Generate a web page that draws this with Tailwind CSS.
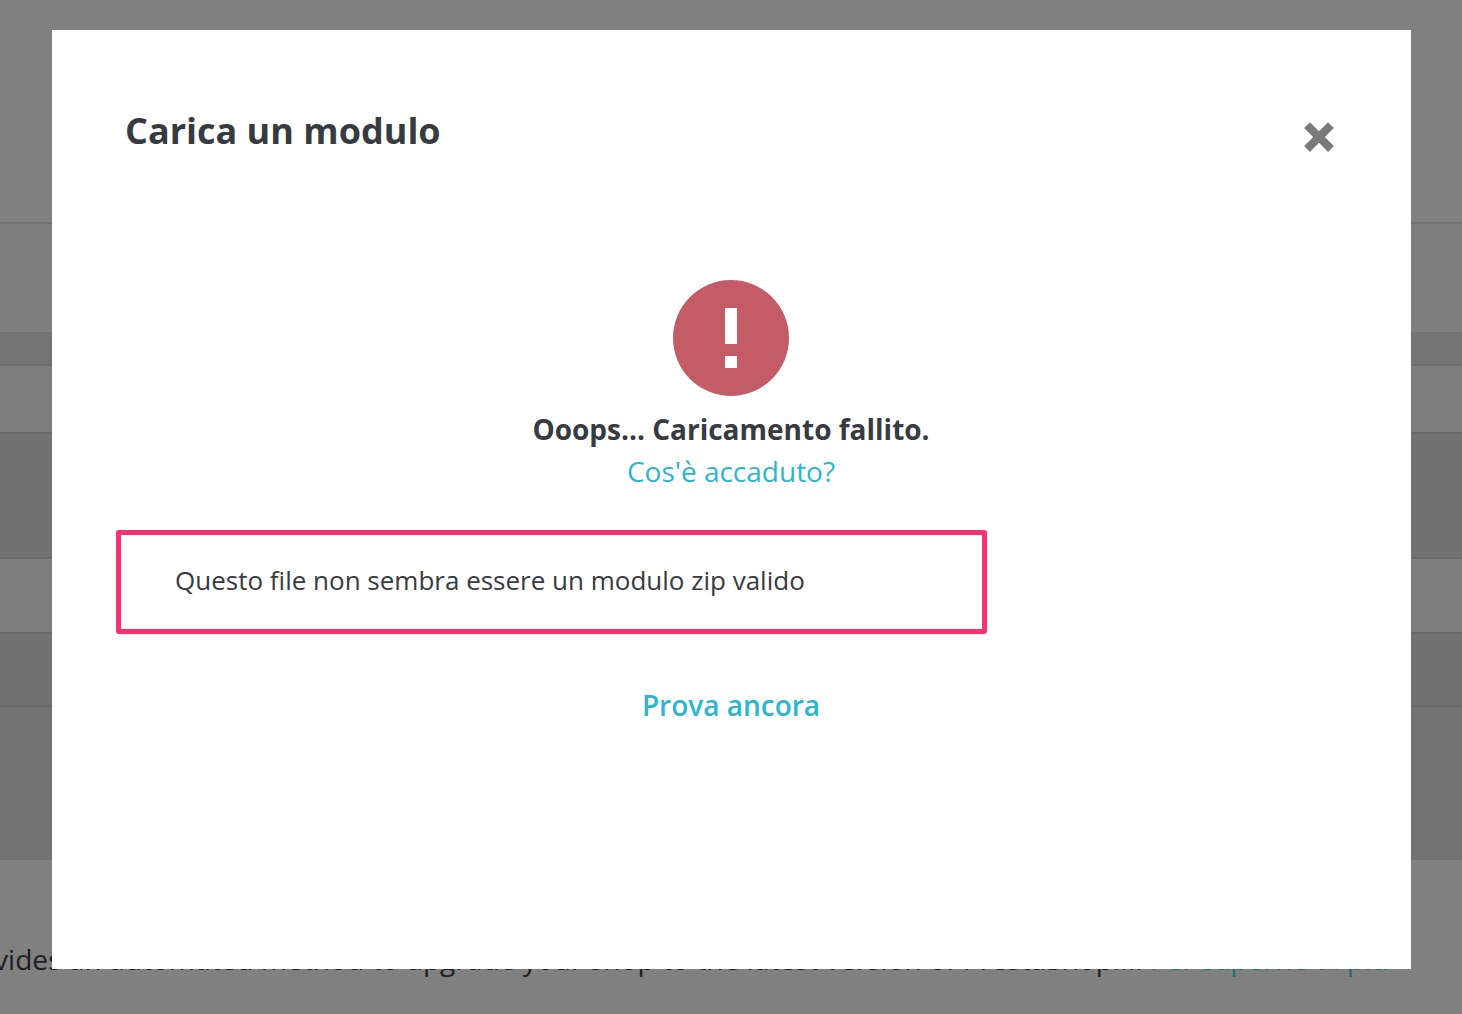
<!DOCTYPE html>
<html><head><meta charset="utf-8"><script src="https://cdn.jsdelivr.net/npm/@tailwindcss/browser@4"></script></head>
<body class="m-0">
<div class="relative w-[1462px] h-[1014px] overflow-hidden bg-[#808080] font-['Open_Sans',sans-serif]">
  <div class="flex flex-col">
    <div class="h-[222px] bg-[#808080]"></div>
    <div class="h-[110px] border-t-2 border-[#6f7173] bg-[#7f7f7f]"></div>
    <div class="h-[32px] bg-[#747474]"></div>
    <div class="h-[68px] border-t-2 border-[#6b6d6f] bg-[#7c7c7c]"></div>
    <div class="h-[125px] border-t-2 border-[#66686a] bg-[#727272]"></div>
    <div class="h-[75px] border-t-2 border-[#696b6d] bg-[#7c7c7c]"></div>
    <div class="h-[73px] border-t-2 border-[#696b6d] bg-[#727272]"></div>
    <div class="h-[155px] border-t-2 border-[#696b6d] bg-[#737373]"></div>
    <div class="h-[154px] bg-[#808080] pt-[81px] whitespace-nowrap text-[28.14px] leading-[36px] text-[#1e2026] -ml-[6px]">vides an automated method to upgrade your shop to the latest version of PrestaShop.... <span class="text-[#1f6f78]">Per saperne di più</span></div>
  </div>
  <div class="absolute left-[52px] top-[30px] w-[1359px] h-[939px] bg-white">
    <div class="flex items-start justify-between pl-[73px] pr-[76px] pt-[76px]">
      <h2 class="text-[36px] leading-[50px] font-bold text-[#363a41]">Carica un modulo</h2>
      <svg class="mt-[14px] -mr-[1px]" width="34" height="34" viewBox="0 0 32 32"><path d="M2 7.5 7.5 2 16 10.5 24.500 2 30 7.5 21.500 16 30 24.500 24.500 30 16 21.500 7.500 30 2 24.500 10.500 16Z" fill="#7a7a7a"/></svg>
    </div>
    <div class="flex flex-col items-center mt-[124px] -ml-[1px]">
      <div class="w-[116px] h-[116px] rounded-full bg-[#c45c67] flex flex-col items-center justify-center gap-[12px]">
        <div class="w-[12px] h-[36px] bg-white"></div>
        <div class="w-[12px] h-[12px] bg-white"></div>
      </div>
      <p class="mt-[11px] text-[28px] leading-[44px] font-bold text-[#363a41]">Ooops... Caricamento fallito.</p>
      <a class="text-[28px] leading-[40px] text-[#2cb5d1]">Cos'è accaduto?</a>
    </div>
    <div class="ml-[64px] mt-[39px] w-[871px] h-[104px] border-[5px] border-[#f9326f] rounded-[3px] flex items-center pl-[54px] text-[26px] text-[#363a41]"><span class="-mt-[4px]">Questo file non sembra essere un modulo zip valido</span></div>
    <p class="mt-[49px] text-center text-[28px] leading-[44px] font-semibold text-[#2cb5d1] -ml-[1px]">Prova ancora</p>
  </div>
</div>
</body></html>
